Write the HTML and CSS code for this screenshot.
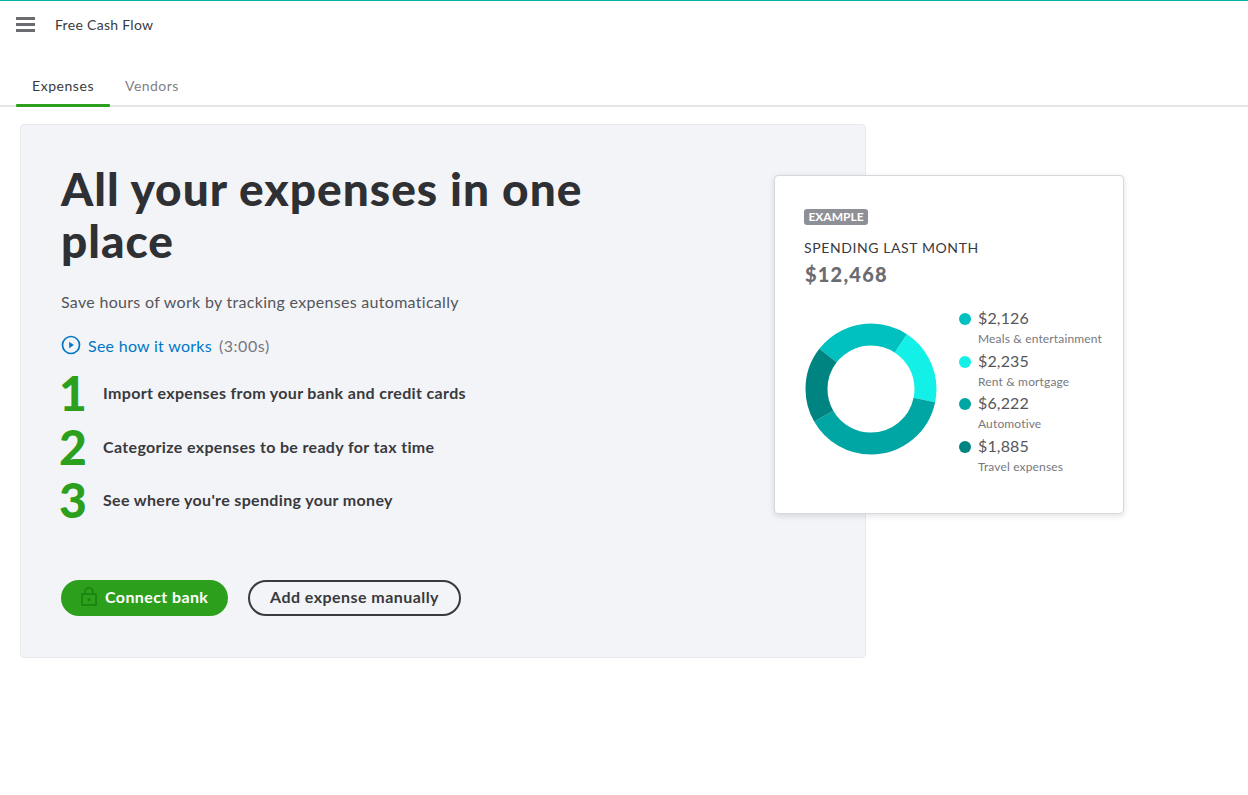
FILE: index.html
```html
<!DOCTYPE html>
<html>

<head>
	<meta charset="utf-8" />
	<title>Free Cash Flow</title>
	<link rel="stylesheet" href="styles.css">
</head>

<body>
	<header class="topbar">
		<div class="burger"><span></span><span></span><span></span></div>
		<div class="app-title">Free Cash Flow</div>
	</header>

	<nav class="tabs">
		<a class="tab on">Expenses</a>
		<a class="tab">Vendors</a>
	</nav>

	<main class="panel">
		<h1>All your expenses in one place</h1>
		<p class="lead">Save hours of work by tracking expenses automatically</p>

		<div class="video">
			<svg class="play" width="20" height="20" viewBox="0 0 20 20">
				<circle cx="10" cy="10" r="8.5" fill="none" stroke="#0077c5" stroke-width="1.7" />
				<path d="M8.2 6.8 L12.8 10 L8.2 13.2 Z" fill="#0077c5" />
			</svg>
			<a class="video-link">See how it works</a>
			<span class="video-time">(3:00s)</span>
		</div>

		<ol class="steps">
			<li><span class="num">1</span><span class="step-text">Import expenses from your bank and credit cards</span></li>
			<li><span class="num">2</span><span class="step-text">Categorize expenses to be ready for tax time</span></li>
			<li><span class="num">3</span><span class="step-text">See where you're spending your money</span></li>
		</ol>

		<div class="actions">
			<a class="btn btn-green">
				<svg class="lock" width="16" height="19" viewBox="0 0 16 19">
					<path d="M4 7 V5 a4 4 0 0 1 8 0 V7" fill="none" stroke="#17820e" stroke-width="1.6" />
					<rect x="1" y="7" width="14" height="11" fill="none" stroke="#17820e" stroke-width="1.6" />
					<circle cx="8" cy="12.5" r="1.5" fill="#17820e" />
				</svg>
				Connect bank
			</a>
			<a class="btn btn-outline">Add expense manually</a>
		</div>

		<!-- example card sits over the edge of the panel -->
		<section class="card">
			<span class="badge">EXAMPLE</span>
			<div class="card-title">SPENDING LAST MONTH</div>
			<div class="card-total">$12,468</div>
			<div class="card-body">
				<svg class="donut" width="132" height="132" viewBox="0 0 132 132">
					<g fill="none" stroke-width="22" transform="rotate(-90 66 66)">
						<circle cx="66" cy="66" r="54.5" pathLength="360" stroke="#00c1bf" stroke-dasharray="33.3 274.6 52.1 0" />
						<circle cx="66" cy="66" r="54.5" pathLength="360" stroke="#13f0e8" stroke-dasharray="68.4 360" stroke-dashoffset="-33.3" />
						<circle cx="66" cy="66" r="54.5" pathLength="360" stroke="#00a6a4" stroke-dasharray="138.3 360" stroke-dashoffset="-101.7" />
						<circle cx="66" cy="66" r="54.5" pathLength="360" stroke="#008481" stroke-dasharray="67.9 360" stroke-dashoffset="-240" />
					</g>
				</svg>
				<ul class="legend">
					<li><i class="dot dot-meals"></i><div><b>$2,126</b><small>Meals &amp; entertainment</small></div></li>
					<li><i class="dot dot-rent"></i><div><b>$2,235</b><small>Rent &amp; mortgage</small></div></li>
					<li><i class="dot dot-auto"></i><div><b>$6,222</b><small>Automotive</small></div></li>
					<li><i class="dot dot-travel"></i><div><b>$1,885</b><small>Travel expenses</small></div></li>
				</ul>
			</div>
		</section>
	</main>
</body>

</html>
```

FILE: styles.css
```css
* {
	margin: 0;
	padding: 0;
	box-sizing: border-box;
}

body {
	font-family: "Lato", "Open Sans", sans-serif;
	color: #393a3d;
	background: #fff;
	border-top: 1px solid #00b3a8;
}

.topbar {
	height: 47px;
	display: flex;
	align-items: center;
	padding: 0 0 0 16px;
}

.burger {
	width: 19px;
	display: flex;
	flex-direction: column;
	gap: 3px;
	margin-top: -1px;
}

.burger span {
	height: 3px;
	background: #6b6c72;
}

.app-title {
	margin-left: 20px;
	font-size: 14px;
	letter-spacing: .3px;
	color: #393a3d;
}

.tabs {
	height: 59px;
	margin-bottom: 17px;
	padding: 0 0 0 16px;
	display: flex;
	border-bottom: 2px solid #e3e5e8;
}

.tab {
	width: 93px;
	padding: 29px 0 0 15px;
	font-size: 14px;
	letter-spacing: .45px;
	color: #808186;
}

.tab.on {
	width: 94px;
	padding-left: 16px;
	letter-spacing: .55px;
	color: #393a3d;
	position: relative;
}

.tab.on:after {
	content: "";
	position: absolute;
	left: 0;
	right: 0;
	bottom: -2px;
	height: 3px;
	background: #2ca01c;
	border-radius: 1px;
}

.panel {
	position: relative;
	width: 846px;
	height: 534px;
	margin-left: 20px;
	padding: 38px 0 0 40px;
	background: #f3f4f8;
	border: 1px solid #e9eaee;
	border-radius: 4px;
}

h1 {
	width: 560px;
	font-size: 46px;
	line-height: 52px;
	font-weight: 900;
	letter-spacing: 1px;
	color: #2f3033;
}

.lead {
	margin-top: 25px;
	font-size: 16px;
	line-height: 20px;
	letter-spacing: .3px;
	color: #55565b;
}

.video {
	margin-top: 23px;
	display: flex;
	align-items: center;
	height: 20px;
	font-size: 16px;
	letter-spacing: .27px;
}

.video-link {
	margin-left: 7px;
	color: #0077c5;
}

.video-time {
	margin-left: 7px;
	letter-spacing: .55px;
	color: #77787d;
}

.steps {
	list-style: none;
	margin-top: 11px;
}

.steps li {
	height: 53.5px;
	display: flex;
	align-items: center;
}

.num {
	width: 41px;
	margin-left: -2px;
	font-size: 48px;
	line-height: 53px;
	font-weight: 900;
	color: #2ca01c;
}

.step-text {
	margin-left: 3px;
	font-size: 16px;
	font-weight: 700;
	letter-spacing: .34px;
	color: #393a3d;
}

.actions {
	margin-top: 53px;
	display: flex;
	gap: 20px;
}

.btn {
	height: 36px;
	border-radius: 18px;
	display: flex;
	align-items: center;
	font-size: 16px;
	font-weight: 700;
	padding-bottom: 2px;
}

.btn-green {
	width: 167px;
	padding-left: 20px;
	gap: 8px;
	letter-spacing: .4px;
	background: #2ca01c;
	color: #fff;
}

.btn-outline {
	width: 213px;
	justify-content: center;
	border: 2px solid #393a3d;
	letter-spacing: .45px;
}

.card {
	position: absolute;
	left: 753px;
	top: 50px;
	width: 350px;
	height: 339px;
	padding: 33px 0 0 29px;
	background: #fff;
	border: 1px solid #d4d7dc;
	border-radius: 4px;
	box-shadow: 0 2px 6px rgba(0, 0, 0, .12);
}

.badge {
	display: block;
	width: 64px;
	height: 16px;
	line-height: 16px;
	text-align: center;
	font-size: 12px;
	font-weight: 700;
	color: #fff;
	background: #8d9096;
	border-radius: 3px;
}

.card-title {
	margin-top: 14px;
	font-size: 14px;
	line-height: 18px;
	letter-spacing: .6px;
	color: #393a3d;
}

.card-total {
	margin: 4px 0 0 1px;
	font-size: 20px;
	line-height: 26px;
	font-weight: 900;
	letter-spacing: 1.2px;
	color: #6b6c72;
}

.card-body {
	margin: 21px 0 0 1px;
	display: flex;
}

.donut {
	margin-top: 15px;
	flex: none;
}

.legend {
	list-style: none;
	margin-left: 22px;
}

.legend li {
	display: flex;
	height: 42.6px;
}

.legend div {
	margin-left: 7px;
}

.dot {
	width: 12px;
	height: 12px;
	margin-top: 5px;
	border-radius: 50%;
}

.dot-meals { background: #00c1bf; }
.dot-rent { background: #13f0e8; }
.dot-auto { background: #00a6a4; }
.dot-travel { background: #008481; }

.legend b {
	display: block;
	font-size: 16px;
	line-height: 20px;
	font-weight: 400;
	letter-spacing: .15px;
	color: #55565b;
}

.legend small {
	display: block;
	margin-top: 3px;
	font-size: 12px;
	line-height: 16px;
	letter-spacing: .15px;
	color: #77787d;
}
```
